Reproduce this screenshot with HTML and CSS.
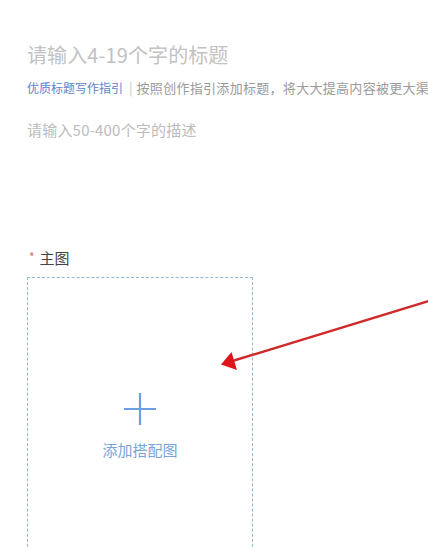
FILE: index.html
```html
<!DOCTYPE html>
<html lang="zh-CN">
<head>
<meta charset="utf-8">
<title>发布</title>
<link rel="stylesheet" href="styles.css">
</head>
<body>
<div class="page">
  <div class="form">
    <div class="title-input">请输入4-19个字的标题</div>
    <div class="guide"><span class="guide-link">优质标题写作指引</span><span class="sep">|</span><span class="guide-text">按照创作指引添加标题，将大大提高内容被更大渠道推荐的机会</span></div>
    <div class="desc-input">请输入50-400个字的描述</div>
    <div class="field-label"><span class="req">*</span>主图</div>
    <div class="upload">
      <svg class="plus" width="34" height="34" viewBox="0 0 34 34"><path d="M17 1V33M1 17H33" stroke="#6e9ee2" stroke-width="2.2" fill="none"/></svg>
      <div class="upload-text">添加搭配图</div>
    </div>
  </div>
  <svg class="arrow" width="428" height="547" viewBox="0 0 428 547">
    <line x1="432" y1="300" x2="234" y2="360.5" stroke="#cf2a2a" stroke-width="2.4"/>
    <polygon points="221,364.5 231.5,352 237,370" fill="#e0151b"/>
  </svg>
</div>
</body>
</html>
```
FILE: styles.css
```css
html, body {
  margin: 0;
  padding: 0;
  background: #ffffff;
}
body {
  font-family: "Noto Sans CJK SC", "Noto Sans", "Liberation Sans", sans-serif;
  overflow: hidden;
}
.page {
  position: relative;
  width: 428px;
  height: 547px;
  overflow: hidden;
}
.form {
  padding: 41px 0 0 27px;
}
.title-input {
  font-size: 20px;
  line-height: 28px;
  color: #c2c2c2;
  letter-spacing: 0.1px;
}
.guide {
  margin-top: 10px;
  font-size: 13px;
  line-height: 18px;
  color: #9a9a9a;
  white-space: nowrap;
  display: flex;
  align-items: center;
}
.guide-link {
  font-size: 12px;
  color: #5a84c8;
}
.sep {
  color: #c8c8c8;
  margin: 0 4px 0 6px;
}
.guide-text {
  color: #9a9a9a;
  letter-spacing: 0.3px;
}
.desc-input {
  margin-top: 23px;
  font-size: 15px;
  line-height: 20px;
  color: #bcbcbc;
  letter-spacing: 0.2px;
}
.field-label {
  margin-top: 108px;
  font-size: 15px;
  line-height: 20px;
  color: #444444;
  display: flex;
  align-items: center;
}
.req {
  color: #e06a6a;
  font-size: 12px;
  margin: 0 5px 0 2px;
  position: relative;
  top: -1px;
}
.upload {
  margin-top: 9px;
  width: 226px;
  height: 300px;
  border: 1px dashed #8fb6cc;
  display: flex;
  flex-direction: column;
  align-items: center;
  padding-top: 114px;
  box-sizing: border-box;
}
.plus {
  display: block;
}
.upload-text {
  margin-top: 14px;
  font-size: 15px;
  line-height: 20px;
  color: #7aa3d8;
}
.arrow {
  position: absolute;
  left: 0;
  top: 0;
  pointer-events: none;
}
```
